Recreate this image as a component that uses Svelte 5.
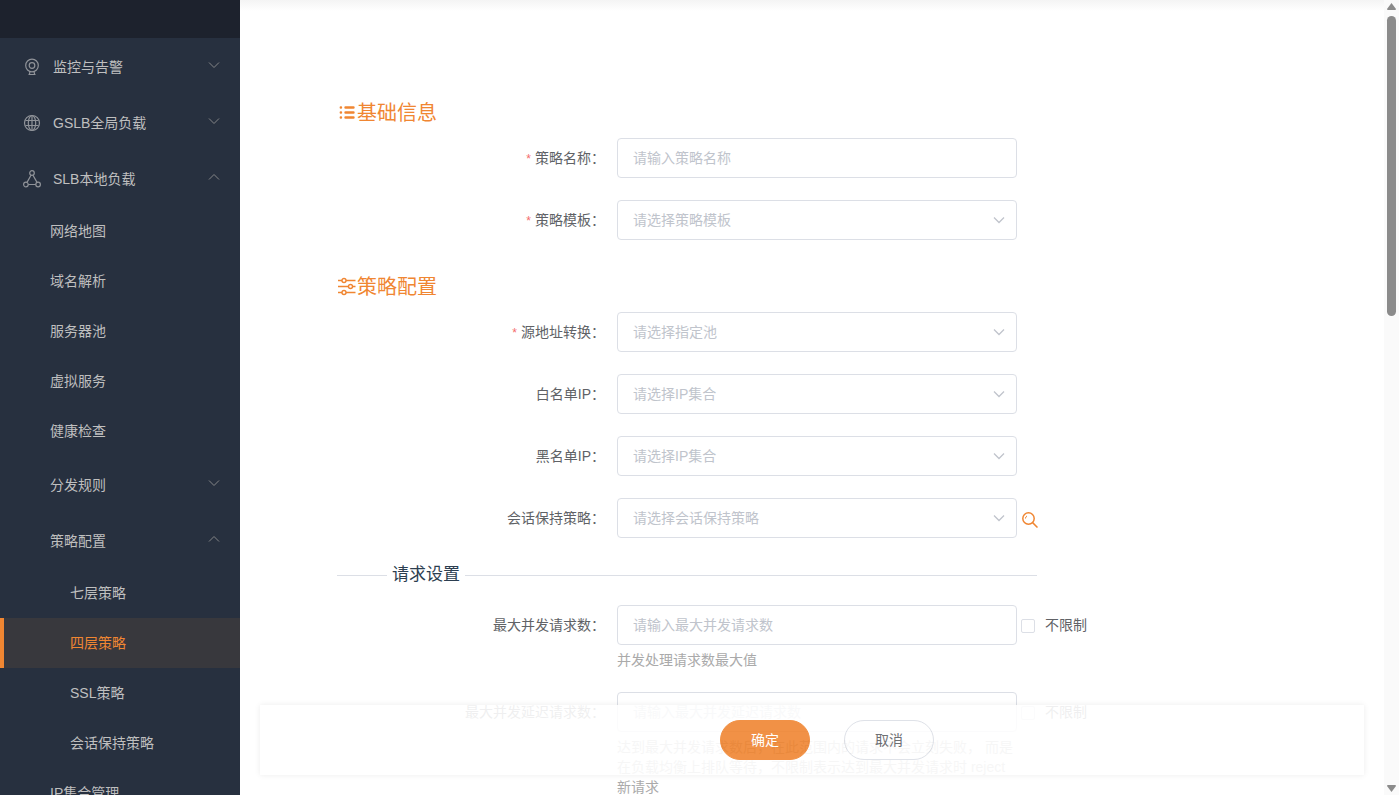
<script lang="ts">
  type Field = {
    id: string
    label: string
    placeholder: string
    kind: 'input' | 'select'
    required?: boolean
    search?: boolean
    unlimited?: boolean
    hint?: string
  }

  const mainMenu = [
    { label: '监控与告警', icon: 'webcam', open: false },
    { label: 'GSLB全局负载', icon: 'globe', open: false },
    { label: 'SLB本地负载', icon: 'share', open: true },
  ]
  const slbItems = ['网络地图', '域名解析', '服务器池', '虚拟服务', '健康检查']
  const policyItems = ['七层策略', '四层策略', 'SSL策略', '会话保持策略']

  let active = $state('四层策略')

  const basic: Field[] = [
    { id: 'name', label: '策略名称', placeholder: '请输入策略名称', kind: 'input', required: true },
    { id: 'template', label: '策略模板', placeholder: '请选择策略模板', kind: 'select', required: true },
  ]
  const config: Field[] = [
    { id: 'snat', label: '源地址转换', placeholder: '请选择指定池', kind: 'select', required: true },
    { id: 'white', label: '白名单IP', placeholder: '请选择IP集合', kind: 'select' },
    { id: 'black', label: '黑名单IP', placeholder: '请选择IP集合', kind: 'select' },
    { id: 'session', label: '会话保持策略', placeholder: '请选择会话保持策略', kind: 'select', search: true },
  ]
  const request: Field[] = [
    {
      id: 'max-req',
      label: '最大并发请求数',
      placeholder: '请输入最大并发请求数',
      kind: 'input',
      unlimited: true,
      hint: '并发处理请求数最大值',
    },
    {
      id: 'max-delay',
      label: '最大并发延迟请求数',
      placeholder: '请输入最大并发延迟请求数',
      kind: 'input',
      unlimited: true,
      hint: '达到最大并发请求数后，在此范围内的请求不会立刻失败， 而是在负载均衡上排队等待，不限制表示达到最大并发请求时 reject 新请求',
    },
  ]
</script>

{#snippet chevron(cls: string)}
  <svg class="chevron {cls}" viewBox="0 0 12 12" aria-hidden="true"><path d="M1 3.5 6 8.5 11 3.5" /></svg>
{/snippet}

{#snippet group(label: string, open: boolean, icon: string)}
  <button class="group" class:sub={!icon} aria-expanded={open}>
    {#if icon === 'webcam'}
      <svg class="icon" viewBox="0 0 18 18" aria-hidden="true">
        <circle cx="9" cy="7.5" r="6.3" /><circle cx="9" cy="7.5" r="2.8" />
        <path d="M7 13.6 6.3 16.5M11 13.6 11.7 16.5M5.5 16.5h7" />
      </svg>
    {:else if icon === 'globe'}
      <svg class="icon" viewBox="0 0 18 18" aria-hidden="true">
        <circle cx="9" cy="9" r="7.5" /><ellipse cx="9" cy="9" rx="3.7" ry="7.5" />
        <path d="M9 1.5v15M2.5 6.5h13M2.5 11.5h13" />
      </svg>
    {:else if icon === 'share'}
      <svg class="icon" viewBox="0 0 18 18" aria-hidden="true">
        <circle cx="9" cy="3" r="2.3" /><circle cx="2.9" cy="14.5" r="2.3" /><circle cx="15.1" cy="14.5" r="2.3" />
        <path d="M8 5.2 4 12.4M10 5.2 14 12.4M5.2 14.5h7.6" />
      </svg>
    {/if}
    <span>{label}</span>
    {@render chevron(open ? 'menu up' : 'menu')}
  </button>
{/snippet}

{#snippet row(f: Field)}
  <div class="row">
    <label class="label" class:required={f.required} for={f.id}>{f.label}：</label>
    <div class="control">
      {#if f.kind === 'select'}
        <div class="select">
          <select id={f.id}><option value="">{f.placeholder}</option></select>
          {@render chevron('arrow')}
        </div>
      {:else}
        <input class="text" id={f.id} type="text" placeholder={f.placeholder} />
      {/if}
      {#if f.hint}<p class="hint">{f.hint}</p>{/if}
    </div>
    {#if f.search}
      <button class="search" aria-label="搜索">
        <svg viewBox="0 0 16 16" aria-hidden="true">
          <circle cx="6.5" cy="6.5" r="5.7" /><path d="M10.6 10.6 15.5 15.5" /><path class="thin" d="M3.5 6.5a3 3 0 0 1 1.5-2.6" />
        </svg>
      </button>
    {/if}
    {#if f.unlimited}
      <label class="check"><input type="checkbox" />不限制</label>
    {/if}
  </div>
{/snippet}

<div class="app">
  <nav class="sidebar">
    <div class="brand"></div>
    {#each mainMenu as m}{@render group(m.label, m.open, m.icon)}{/each}
    {#each slbItems as item}
      <a class="item" href="#/slb">{item}</a>
    {/each}
    {@render group('分发规则', false, '')}
    {@render group('策略配置', true, '')}
    {#each policyItems as item}
      <a class="item deep" class:active={active === item} href="#/policy" onclick={() => (active = item)}>{item}</a>
    {/each}
    <a class="item" href="#/ipset">IP集合管理</a>
  </nav>

  <main class="content">
    <form class="form">
      <h2>
        <svg class="title-icon list" viewBox="0 0 20 20" aria-hidden="true">
          <path d="M8.5 4.5h8M8.5 9.5h8M8.5 14.5h8" /><path d="M3.8 4.5h.2M3.8 9.5h.2M3.8 14.5h.2" />
        </svg>基础信息
      </h2>
      {#each basic as f}{@render row(f)}{/each}

      <h2>
        <svg class="title-icon" viewBox="0 0 20 20" aria-hidden="true">
          <path d="M1 3.5h4M9 3.5h9.5M1 9.5h10.5M15.5 9.5h3M1 15.5h4M9 15.5h9.5" />
          <circle cx="7" cy="3.5" r="2" /><circle cx="13.5" cy="9.5" r="2" /><circle cx="7" cy="15.5" r="2" />
        </svg>策略配置
      </h2>
      {#each config as f}{@render row(f)}{/each}

      <h3>请求设置</h3>
      {#each request as f}{@render row(f)}{/each}
    </form>

    <div class="footer">
      <button class="btn primary">确定</button>
      <button class="btn">取消</button>
    </div>
  </main>

  <div class="scrollbar" aria-hidden="true">
    <svg viewBox="0 0 9 7"><path d="M4.5 0 9 6 8.5 7h-8L0 6z" /></svg>
    <div class="thumb"></div>
    <svg class="down" viewBox="0 0 9 7"><path d="M4.5 0 9 6 8.5 7h-8L0 6z" /></svg>
  </div>
</div>

<style>
  :global(body) {
    margin: 0;
  }
  .app {
    display: flex;
    height: 100vh;
    overflow: hidden;
    background: #fff;
    color: #606266;
    font: 14px/20px 'Liberation Sans', 'Noto Sans CJK SC', sans-serif;
  }
  button,
  input,
  select {
    font: inherit;
    color: inherit;
  }
  svg {
    display: block;
    flex-shrink: 0;
    fill: none;
    stroke: currentColor;
  }

  .sidebar {
    flex: 0 0 240px;
    overflow: hidden;
    background: #27303f;
    color: #bfbfbf;
  }
  .brand {
    height: 38px;
    background: #1d222d;
  }
  .group {
    display: flex;
    align-items: center;
    box-sizing: border-box;
    width: 100%;
    height: 56px;
    padding: 2px 20px 0 23px;
    border: 0;
    background: none;
    text-align: left;
    cursor: pointer;
  }
  .group.sub {
    padding-left: 50px;
  }
  .group span {
    flex: 1;
  }
  .icon {
    width: 18px;
    height: 18px;
    margin-right: 12px;
    color: #909399;
    stroke-width: 1.2;
  }
  .chevron {
    width: 12px;
    height: 12px;
  }
  .chevron.menu {
    margin-bottom: 4px;
    color: #858688;
  }
  .chevron.up {
    transform: rotate(180deg);
  }
  .item {
    display: block;
    padding-left: 50px;
    line-height: 50px;
    color: inherit;
    text-decoration: none;
  }
  .item.deep {
    padding-left: 70px;
  }
  .item.active {
    padding-left: 66px;
    border-left: 4px solid #f08632;
    background: #38383d;
    color: #f08632;
  }

  .content {
    position: relative;
    flex: 1;
    min-width: 0;
    overflow: hidden;
    background: linear-gradient(#f4f4f4, #fff 11px);
  }
  .form {
    padding: 98px 20px 0 97px;
  }
  h2 {
    display: flex;
    align-items: center;
    height: 30px;
    margin: 0 0 10px;
    color: #f08632;
    font-size: 20px;
    font-weight: 400;
  }
  .row + h2 {
    margin-top: 32px;
  }
  .title-icon {
    width: 20px;
    height: 20px;
    stroke-width: 1.4;
  }
  .title-icon.list {
    stroke-width: 2.4;
    stroke-linecap: round;
  }
  h3 {
    display: flex;
    align-items: center;
    gap: 5px;
    max-width: 700px;
    height: 24px;
    margin: 25px 0 18px;
    color: #2c3e50;
    font-size: 17px;
    font-weight: 400;
  }
  h3::before,
  h3::after {
    content: '';
    flex: 1;
    height: 1px;
    background: #dcdfe6;
  }
  h3::before {
    flex: 0 0 50px;
  }

  .row {
    display: flex;
    margin-bottom: 22px;
  }
  .label {
    flex: 0 0 268px;
    padding-right: 12px;
    line-height: 40px;
    text-align: right;
  }
  .required::before {
    content: '*';
    margin-right: 4px;
    color: #f56c6c;
    font-size: 12px;
    line-height: 1;
  }
  .control {
    flex: 0 1 400px;
  }
  .text,
  select {
    display: block;
    box-sizing: border-box;
    width: 100%;
    height: 40px;
    padding: 0 15px;
    border: 1px solid #dcdfe6;
    border-radius: 4px;
    outline: none;
    background: #fff;
  }
  select {
    appearance: none;
    color: #c0c4cc;
  }
  .text::placeholder {
    color: #c0c4cc;
  }
  .select {
    position: relative;
  }
  .arrow {
    position: absolute;
    top: 14px;
    right: 12px;
    color: #c0c4cc;
    stroke-width: 1.3;
    pointer-events: none;
  }
  .hint {
    margin: 5px 0 0;
    color: #aaa;
  }
  .search {
    align-self: center;
    margin: 4px 0 0 5px;
    padding: 0;
    border: 0;
    background: none;
    color: #f08632;
    cursor: pointer;
  }
  .search svg {
    width: 16px;
    height: 16px;
    stroke-width: 1.5;
  }
  .search .thin {
    stroke-width: 1;
  }
  .check {
    display: flex;
    align-items: center;
    gap: 10px;
    height: 40px;
    margin-left: 4px;
    white-space: nowrap;
  }
  .check input {
    appearance: none;
    box-sizing: border-box;
    width: 14px;
    height: 14px;
    margin: 2px 0 0;
    border: 1px solid #dcdfe6;
    border-radius: 2px;
    background: #fff;
  }

  .footer {
    position: absolute;
    right: 20px;
    bottom: 20px;
    left: 20px;
    box-sizing: border-box;
    display: flex;
    justify-content: center;
    gap: 34px;
    padding: 15px 0 15px 30px;
    background: #fff;
    box-shadow: 0 0 6px rgba(0, 0, 0, 0.08);
    opacity: 0.9;
  }
  .btn {
    width: 90px;
    height: 40px;
    padding: 0;
    border: 1px solid #dcdfe6;
    border-radius: 20px;
    background: #fff;
    cursor: pointer;
  }
  .btn.primary {
    border-color: #f08632;
    background: #f08632;
    color: #fff;
  }

  .scrollbar {
    display: flex;
    flex: 0 0 15px;
    flex-direction: column;
    align-items: center;
    box-sizing: border-box;
    padding: 3px 0;
    background: #fafafa;
  }
  .scrollbar svg {
    width: 9px;
    height: 7px;
    fill: #8b8b8b;
    stroke: none;
  }
  .scrollbar .down {
    margin-top: auto;
    transform: rotate(180deg);
  }
  .thumb {
    width: 9px;
    height: 38%;
    margin-top: 6px;
    border-radius: 5px;
    background: #8b8b8b;
  }
</style>
